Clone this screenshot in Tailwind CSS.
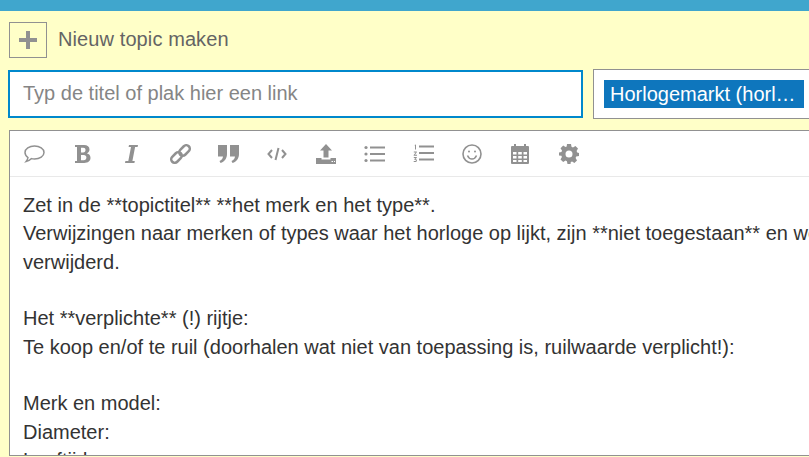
<!DOCTYPE html>
<html lang="en">
<head>
<meta charset="UTF-8" />
<title>Nieuw topic maken</title>
<script src="https://cdn.jsdelivr.net/npm/@tailwindcss/browser@4"></script>
</head>
<body class="h-[457px] w-[809px] overflow-hidden bg-[#ffffc8] font-['Liberation_Sans',sans-serif]">
    <!-- top bar -->
    <div class="h-[11px] bg-[#40a6cd]"></div>

    <!-- title row -->
    <div class="flex items-center h-[36px] mt-[11px] pl-[9px]">
        <div class="flex justify-center items-center w-[38px] h-[36px] border border-[#919191]">
            <svg width="18" height="18" viewBox="0 0 18 18"><path d="M7 0h4v7h7v4h-7v7H7v-7H0V7h7z" fill="#919191" /></svg>
        </div>
        <span class="ml-[11px] mb-[3px] text-[20px] tracking-[0.1px] text-[#646464]">Nieuw topic maken</span>
    </div>

    <div class="w-[809px] overflow-hidden">
        <!-- inputs row -->
        <div class="flex items-center mt-[11px] ml-[8px] w-[860px]">
            <div class="flex items-center w-[575px] h-[48px] pl-[13px] pb-[2px] bg-white border-2 border-[#0088cc] text-[20px] text-[#858585]">Typ de titel of plak hier een link</div>
            <div class="flex items-center w-[260px] h-[50px] ml-[10px] pl-[10px] bg-white border border-[#919191]">
                <span class="flex items-center w-[200px] h-[28px] pl-[6px] bg-[#0e76bd] text-[20px] text-white">Horlogemarkt (horl…</span>
            </div>
        </div>

        <!-- editor -->
        <div class="mt-[11px] ml-[9px] w-[860px] h-[326px] bg-white border border-[#919191] overflow-hidden">
            <div class="flex items-center h-[46px] border-b border-[#e9e9e9]">
                <div class="flex justify-center w-[48.6px]"><svg width="21" height="18" viewBox="0 0 21 18" fill="none" stroke="#919191" stroke-width="1.500"><path d="M10.500 1c5.300 0 9.500 2.900 9.500 6.500S15.800 14 10.500 14c-1 0-2-.1-3-.4-1.300 1.400-3 2.400-5.500 3 1-1.300 1.800-2.600 2-4.100C2.300 11.300 1 9.500 1 7.500 1 3.900 5.200 1 10.500 1z" /></svg></div>
                <div class="flex justify-center w-[48.6px]"><svg width="16" height="18" viewBox="0 0 16 18" fill="#919191"><path fill-rule="evenodd" d="M0 0h9c3.500 0 5.500 1.700 5.500 4.400 0 1.800-1 3.200-2.700 3.900 2.300.6 3.700 2.200 3.700 4.500 0 3.200-2.400 5.200-6.300 5.200H0v-2h2V2H0zM6 2.800v4.600h2.200c1.500 0 2.300-.8 2.300-2.300S9.700 2.800 8.200 2.800zM6 10v5.200h2.700c1.700 0 2.700-1 2.700-2.600S10.400 10 8.700 10z" /></svg></div>
                <div class="flex justify-center w-[48.6px]"><svg width="13" height="18" viewBox="0 0 13 18" fill="#919191"><path d="M4 0h9l-.4 2h-2.500L7.400 16h2.400l-.4 2H0l.4-2h2.900L6 2H3.600z" /></svg></div>
                <div class="flex justify-center w-[48.6px]"><svg width="21" height="20" viewBox="0 0 21 20" fill="none" stroke="#919191" stroke-width="2.500"><rect x="8.500" y="3" width="12" height="7" rx="3.500" transform="rotate(-45 14.500 6.500)" /><rect x="0.500" y="10" width="12" height="7" rx="3.500" transform="rotate(-45 6.500 13.500)" /></svg></div>
                <div class="flex justify-center w-[48.6px]"><svg width="21" height="18" viewBox="0 0 21 18" fill="#919191"><path d="M0 0h9v9c0 4.500-2.500 7.700-6.500 9L1.500 16c2-.8 3.300-2.300 3.500-4.500H0zM12 0h9v9c0 4.500-2.500 7.700-6.500 9l-1-2c2-.8 3.300-2.300 3.500-4.500H12z" /></svg></div>
                <div class="flex justify-center w-[48.6px]"><svg width="20" height="14" viewBox="0 0 20 14" fill="none" stroke="#919191" stroke-width="2"><path d="M5 3L1.500 7 5 11M15 3l3.500 4L15 11M11.500 1l-3 12" /></svg></div>
                <div class="flex justify-center w-[48.6px]"><svg width="20" height="20" viewBox="0 0 20 20" fill="#919191"><path fill-rule="evenodd" d="M10 0l6 6.500h-3.500v7h-5v-7H4zM0 14h5.500v1.500h9V14H20v6H0zM15.500 17h1.500v1h-1.500zM18 17h1v1h-1z" /></svg></div>
                <div class="flex justify-center w-[48.6px]"><svg width="21" height="18" viewBox="0 0 21 18" fill="#919191"><circle cx="2" cy="2.500" r="1.600" /><circle cx="2" cy="9" r="1.600" /><circle cx="2" cy="15.500" r="1.600" /><path d="M6 1.500h15v2H6zM6 8h15v2H6zM6 14.500h15v2H6z" /></svg></div>
                <div class="flex justify-center w-[48.6px]"><svg width="21" height="19" viewBox="0 0 21 19" fill="#919191"><path d="M6 1.500h15v2H6zM6 8h15v2H6zM6 14.500h15v2H6z" /><path d="M1.500 1l1.500-.6v5h-1V1.800zM.8 7.500h3v.8L2 10.800h2v.9H.7v-.8l2-2.500H.8zM.8 13h3v.7l-1.200 1.400c.8.100 1.300.6 1.300 1.300 0 1-.8 1.600-1.800 1.600H.7v-.9h1.400c.5 0 .8-.3.800-.7s-.3-.7-.9-.7h-.7v-.7L2.500 13.900H.8z" /></svg></div>
                <div class="flex justify-center w-[48.6px]"><svg width="20" height="20" viewBox="0 0 20 20" fill="none" stroke="#919191"><circle cx="10" cy="10" r="9" stroke-width="1.600" /><path d="M5.500 11.500c1 2.500 2.600 3.500 4.500 3.500s3.500-1 4.500-3.500" stroke-width="1.500" /><circle cx="7" cy="7.500" r="1" fill="#919191" stroke="none" /><circle cx="13" cy="7.500" r="1" fill="#919191" stroke="none" /></svg></div>
                <div class="flex justify-center w-[48.6px]"><svg width="18" height="20" viewBox="0 0 18 20" fill="#919191"><path fill-rule="evenodd" d="M3 0h2v2h8V0h2v2h2a1 1 0 0 1 1 1v16a1 1 0 0 1-1 1H1a1 1 0 0 1-1-1V3a1 1 0 0 1 1-1h2zM2 8v2.500h3.500V8zM7.200 8v2.500h3.600V8zM12.500 8v2.500H16V8zM2 12v2.500h3.500V12zM7.200 12v2.500h3.600V12zM12.500 12v2.500H16V12zM2 16v2h3.500v-2zM7.200 16v2h3.600v-2zM12.500 16v2H16v-2z" /></svg></div>
                <div class="flex justify-center w-[48.6px]"><svg width="20" height="20" viewBox="0 0 20 20" fill="#919191"><path fill-rule="evenodd" d="M8 0h4l.5 2.800 1.500.6L16.400 2 19 4.600l-1.400 2.300.6 1.500L20 9v3l-2.800.6-.6 1.500 1.400 2.300L15.400 19l-2.300-1.500-1.300.6L11.500 20h-3l-.6-2.800-1.400-.6L4.200 18 1.500 15.400l1.400-2.300-.5-1.400L0 11.500v-3l2.500-.6.500-1.400L1.500 4.200 4.200 1.600l2.300 1.500 1.200-.5zM10 6.500a3.500 3.500 0 1 0 0 7 3.500 3.500 0 0 0 0-7z" /></svg></div>
            </div>
            <div class="pt-[14px] pl-[13px] text-[20px] leading-[28.35px] text-[#333333]">
                <p>Zet in de **topictitel** **het merk en het type**.</p>
                <p class="whitespace-nowrap">Verwijzingen naar merken of types waar het horloge op lijkt, zijn **niet toegestaan** en worden</p>
                <p>verwijderd.</p>
                <p class="mt-[28.35px]">Het **verplichte** (!) rijtje:</p>
                <p>Te koop en/of te ruil (doorhalen wat niet van toepassing is, ruilwaarde verplicht!):</p>
                <p class="mt-[28.35px]">Merk en model:</p>
                <p>Diameter:</p>
                <p>Leeftijd:</p>
            </div>
        </div>
    </div>
</body>
</html>
